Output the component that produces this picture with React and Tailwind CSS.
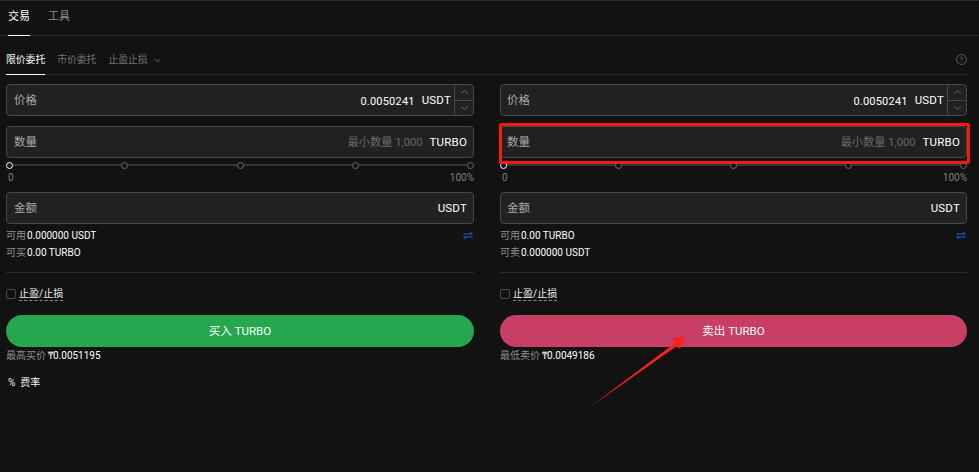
const FONT = { fontFamily: 'Roboto, "Noto Sans CJK SC", sans-serif' };

function Field({ label, value, placeholder, unit, stepper, left }) {
  return (
    <div className="flex h-[32px] items-stretch rounded-[4px] border border-[#474747] bg-[#212121]">
      <div className={`flex min-w-0 flex-1 items-center justify-between ${left ? "pl-[6px]" : "pl-[7px]"} ${stepper ? "pr-[3px]" : "pr-[6px]"}`}>
        <span className="pt-px text-[11.5px] leading-none text-[#a8a8a8]">{label}</span>
        <span className="flex items-center gap-[7px] pt-[2px] text-[11.5px] leading-none tracking-[0.2px]">
          {placeholder && <span className="text-[11.2px] tracking-normal text-[#696969]">{placeholder}</span>}
          {value && <span className="text-[11px] text-white">{value}</span>}
          <span className="text-white">{unit}</span>
        </span>
      </div>
      {stepper && (
        <div className="flex w-[19px] flex-col border-l border-[#474747]">
          <div className="flex flex-1 items-center justify-center border-b border-[#474747]">
            <svg width="9" height="6" viewBox="0 0 9 6" fill="none"><path d="M1 4.5 4.5 1.5 8 4.5" stroke="#6a6a6a" strokeWidth="1" /></svg>
          </div>
          <div className="flex flex-1 items-center justify-center">
            <svg width="9" height="6" viewBox="0 0 9 6" fill="none"><path d="M1 1.5 4.5 4.5 8 1.5" stroke="#6a6a6a" strokeWidth="1" /></svg>
          </div>
        </div>
      )}
    </div>
  );
}

function Slider() {
  return (
    <div className="mt-[3px]">
      <div className="relative flex h-[8px] items-center justify-between">
        <div className="absolute inset-x-0 top-[3px] h-[2px] bg-[#333333]" />
        <span className="relative box-border h-[7px] w-[7px] rounded-full border-[1.5px] border-white bg-[#121212]" />
        <span className="relative box-border h-[7px] w-[7px] rounded-full border border-[#6b6b6b] bg-[#121212]" />
        <span className="relative box-border h-[7px] w-[7px] rounded-full border border-[#6b6b6b] bg-[#121212]" />
        <span className="relative box-border h-[7px] w-[7px] rounded-full border border-[#6b6b6b] bg-[#121212]" />
        <span className="relative box-border h-[7px] w-[7px] rounded-full border border-[#6b6b6b] bg-[#121212]" />
      </div>
      <div className="mt-[3px] flex justify-between pl-[2px] text-[10px] leading-[12px] text-[#7d7d7d]">
        <span>0</span>
        <span>100%</span>
      </div>
    </div>
  );
}

function Swap() {
  return (
    <svg width="10" height="9" viewBox="0 0 10 9" fill="none" className="mr-[1px]">
      <path d="M0.5 3H9.5L7 0.8" stroke="#2f5cf0" strokeWidth="1" />
      <path d="M9.5 6H0.5L3 8.2" stroke="#2f5cf0" strokeWidth="1" />
    </svg>
  );
}

function Column({ l1, v1, l2, v2, btn, btnClass, l3, v3, left, children }) {
  return (
    <div className="flex min-w-0 flex-col">
      <Field left={left} label="价格" value="0.0050241" unit="USDT" stepper />
      <div className="mt-[10px]">
        <Field left={left} label="数量" placeholder="最小数量 1,000" unit="TURBO" />
      </div>
      <Slider />
      <div className="mt-[8px]">
        <Field left={left} label="金额" unit="USDT" />
      </div>
      <div className="mt-[3px] flex h-[17px] items-center justify-between text-[10px] leading-none">
        <span className="flex gap-[1px]"><span className="text-[#8e8e8e]">{l1}</span><span className="text-white">{v1}</span></span>
        <Swap />
      </div>
      <div className="flex h-[17px] items-center text-[10px] leading-none">
        <span className="flex gap-[1px]"><span className="text-[#8e8e8e]">{l2}</span><span className="text-white">{v2}</span></span>
      </div>
      <div className="mt-[11px] h-px bg-[#2b2b2b]" />
      <div className="mt-[14px] flex h-[14px] items-center gap-[3px]">
        <span className="box-border h-[10px] w-[10px] rounded-[2px] border border-[#4a4a4a]" />
        <span className="border-b border-dashed border-[#8a8a8a] text-[10px] leading-[12px] text-[#f0f0f0]">止盈/止损</span>
      </div>
      <div className={`mt-[14px] flex h-[32px] items-center justify-center rounded-full pt-px text-[11.5px] text-white ${btnClass}`}>{btn}</div>
      <div className="mt-[3px] flex h-[11px] items-center text-[10px] leading-none">
        <span className="text-[#8e8e8e]">{l3}</span>
        <span className="ml-[2px] text-white">{v3}</span>
      </div>
      {children}
    </div>
  );
}

export default function App() {
  return (
    <div style={FONT} className="relative h-[472px] w-[979px] overflow-hidden border-t border-[#2b2b2b] bg-[#121212]">
      <div className="flex h-[35px] items-stretch gap-[18px] border-b border-[#2b2b2b] pl-[8px]">
        <div className="-mb-px flex items-center border-b border-white pb-[1px] text-[11px] text-white">交易</div>
        <div className="flex items-center pb-[1px] text-[11px] text-[#8e8e8e]">工具</div>
      </div>
      <div className="ml-[6px] mr-[12px] mt-[2px] flex h-[37px] items-stretch justify-between border-b border-[#2b2b2b]">
        <div className="flex gap-[12px] text-[9.8px]">
          <div className="-mb-px flex items-center border-b border-white pt-[8px] text-white">限价委托</div>
          <div className="flex items-center pt-[8px] text-[#737373]">市价委托</div>
          <div className="flex items-center gap-[6px] pt-[8px] text-[#737373]">
            <span>止盈止损</span>
            <svg width="7" height="5" viewBox="0 0 7 5" fill="none"><path d="M.7 1 3.5 3.8 6.3 1" stroke="#7a7a7a" strokeWidth="1" /></svg>
          </div>
        </div>
        <div className="flex items-center pt-[7px]">
          <svg width="11" height="11" viewBox="0 0 11 11" fill="none">
            <circle cx="5.5" cy="5.5" r="5" stroke="#5a5a5a" />
            <path d="M4 4.4C4 3.5 4.7 3 5.5 3S7 3.5 7 4.3C7 5.3 5.5 5.3 5.5 6.3" stroke="#5a5a5a" />
            <circle cx="5.5" cy="8" r=".6" fill="#5a5a5a" />
          </svg>
        </div>
      </div>
      <div className="ml-[6px] mr-[12px] mt-[9px] grid grid-cols-[468px_467px] gap-x-[26px]">
        <Column left={false} l1="可用" v1="0.000000 USDT" l2="可买" v2="0.00 TURBO" btn="买入 TURBO" btnClass="bg-[#25a750]" l3="最高买价" v3="₸0.0051195">
          <div className="mt-[16px] flex h-[11px] items-center gap-[5px] pl-[2px] text-[10px] leading-none text-[#f0f0f0]">
            <span>%</span>
            <span>费率</span>
          </div>
        </Column>
        <Column left l1="可用" v1="0.00 TURBO" l2="可卖" v2="0.000000 USDT" btn="卖出 TURBO" btnClass="bg-[#c83e65]" l3="最低卖价" v3="₸0.0049186" />
      </div>

      {/* Annotations laid over the screenshot */}
      <div className="absolute left-[499px] top-[122px] h-[41px] w-[471px] rounded-[2px] border-[3px] border-[#f5190f]" />
      <svg className="absolute left-[585px] top-[327px]" width="110" height="80" viewBox="0 0 110 80" fill="none">
        <path d="M5 79 90 15 88 10 100 9 95 21 92 18Z" fill="#f4241b" />
      </svg>
    </div>
  );
}
